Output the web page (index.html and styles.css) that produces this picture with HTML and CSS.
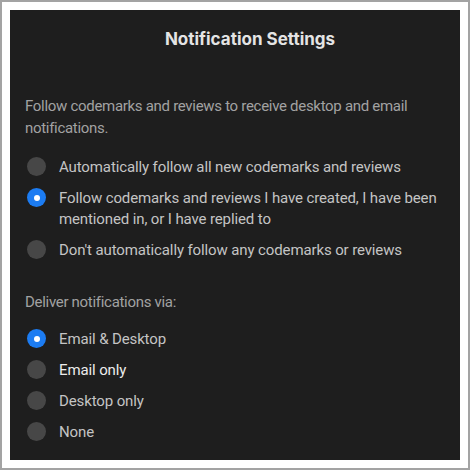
FILE: index.html
```html
<!DOCTYPE html>
<html lang="en">
<head>
<meta charset="utf-8">
<title>Notification Settings</title>
<link rel="stylesheet" href="styles.css">
</head>
<body>
<div class="frame">
  <div class="panel">
    <h1 class="title">Notification Settings</h1>
    <p class="desc">Follow codemarks and reviews to receive desktop and email notifications.</p>
    <div class="group first-group">
      <div class="option"><span class="radio"></span><span class="label">Automatically follow all new codemarks and reviews</span></div>
      <div class="option"><span class="radio checked"></span><span class="label">Follow codemarks and reviews I have created, I have been mentioned in, or I have replied to</span></div>
      <div class="option"><span class="radio"></span><span class="label">Don't automatically follow any codemarks or reviews</span></div>
    </div>
    <p class="desc section">Deliver notifications via:</p>
    <div class="group second-group">
      <div class="option"><span class="radio checked"></span><span class="label">Email &amp; Desktop</span></div>
      <div class="option"><span class="radio"></span><span class="label hover">Email only</span></div>
      <div class="option"><span class="radio"></span><span class="label">Desktop only</span></div>
      <div class="option"><span class="radio"></span><span class="label">None</span></div>
    </div>
  </div>
</div>
</body>
</html>
```
FILE: styles.css
```css
* { box-sizing: border-box; }
html, body { margin: 0; padding: 0; }
body {
  width: 470px;
  height: 470px;
  font-family: Roboto, "Noto Sans", sans-serif;
}
.frame {
  width: 470px;
  height: 470px;
  border: 2px solid #a3a3a3;
  background: #ffffff;
  padding: 8px;
}
.panel {
  width: 450px;
  height: 450px;
  background: #1e1e1e;
  padding: 18px 15px 0 15px;
  display: flex;
  flex-direction: column;
}
.title {
  margin: 0;
  padding-left: 30px;
  font-family: Inter, Roboto, sans-serif;
  font-size: 17px;
  line-height: 22px;
  font-weight: 700;
  color: #e4e4e4;
  text-align: center;
}
.desc {
  margin: 45px 0 0 0;
  font-size: 15px;
  line-height: 22px;
  letter-spacing: -0.3px;
  color: #a2a2a2;
}
.desc.section { margin-top: 30px; }
.group {
  display: flex;
  flex-direction: column;
  gap: 10px;
  margin-top: 18px;
  padding-left: 2px;
}
.second-group { margin-top: 16px; }
.option {
  display: flex;
  align-items: flex-start;
  gap: 13px;
}
.radio {
  flex: 0 0 19px;
  width: 19px;
  height: 19px;
  border-radius: 50%;
  background: #474747;
  position: relative;
}
.radio.checked { background: #1c7cf2; }
.radio.checked::after {
  content: "";
  position: absolute;
  left: 6.5px;
  top: 6.5px;
  width: 6px;
  height: 6px;
  border-radius: 50%;
  background: #ffffff;
}
.label {
  font-size: 15px;
  line-height: 21px;
  letter-spacing: -0.12px;
  color: #c4c4c4;
}
.label.hover { color: #ececec; }
```
